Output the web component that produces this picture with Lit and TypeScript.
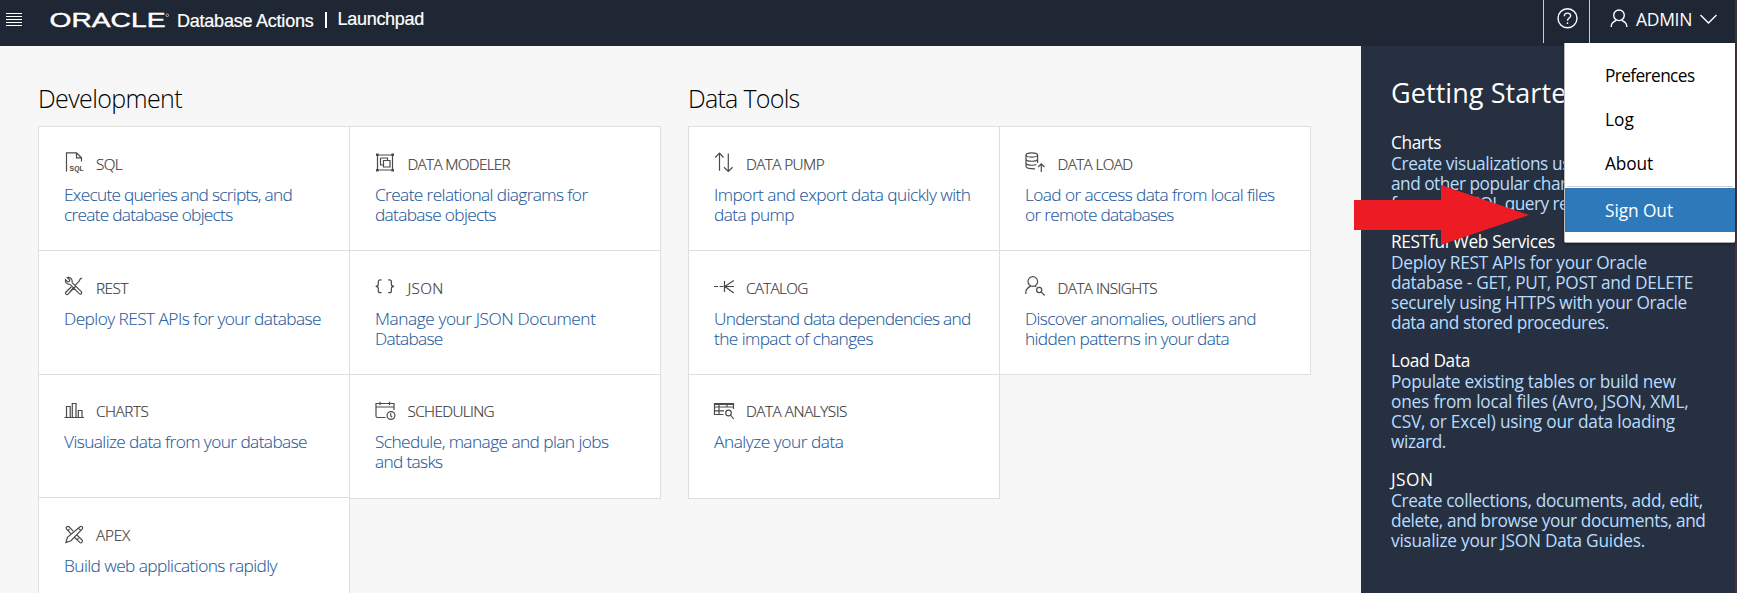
import { LitElement, html, svg, css } from "lit";
import { customElement, property } from "lit/decorators.js";

/** One line of text, tracked so that it fills a given width. */
@customElement("fit-line")
class FitLine extends LitElement {
  @property() text = "";
  @property({ type: Number }) w = 0;
  static styles = css`
    :host { display: block; white-space: nowrap; }
  `;
  render() {
    return html`<span>${this.text}</span>`;
  }
  updated() {
    const s = this.renderRoot.querySelector("span") as HTMLElement;
    s.style.letterSpacing = "0px";
    const natural = s.getBoundingClientRect().width;
    if (this.w && natural) s.style.letterSpacing = (this.w - natural) / this.text.length + "px";
  }
}

const line = (text: string, w: number) => html`<fit-line .text=${text} .w=${w}></fit-line>`;

const icons: Record<string, any> = {
  sql: svg`<path d="M2.5 19.5V.8h10l5 5V9.5M12.5.8v5h5"/><text x="5.6" y="19.2" class="tiny" textLength="14" lengthAdjust="spacingAndGlyphs">SQL</text>`,
  modeler: svg`<path d="M3.5 3h15v15h-15z"/><path d="M6.500 6h7v2.500M6.500 6v7h2.500M9.500 8.500h6.500v6.500h-6.500z"/><path class="fill" d="M2 1.500h2.600v2.600H2zM17.400 1.500H20v2.600h-2.600zM2 16.900h2.600v2.600H2zM17.400 16.900H20v2.600h-2.600z"/>`,
  rest: svg`<path d="M3.300 1.600l2.400 2.300-.4 1.600-1.700.3-2-2.200c-.6 2 .3 4.300 2.800 4.600 1 .1 1.500 0 2 .500l8.800 8.900c1.400 1.300 3.300-.4 2.100-1.900L8.400 6.800c-.4-.6-.2-1.200-.3-2C7.800 2.400 5.500 1 3.300 1.600zM17.900 2.100l-1.700.9-1.200 2.300-3.900 4M9 12l-5 6.300c-1.500 1-3.200-.6-2.200-2.100l5.600-5.500M11.500 10.500L5 17.200"/>`,
  json: svg`<path d="M7.500 3.800H6.300Q4.300 3.800 4.300 5.800v2.400q0 2-2.600 2.100 2.600.1 2.600 2.100v2.300q0 2 2 2h1.200M14.200 3.800h1.200q2 0 2 2v2.400q0 2 2.600 2.100-2.600.1-2.600 2.100v2.300q0 2-2 2h-1.200"/>`,
  charts: svg`<path d="M.5 18.500h19.500M2.500 18.500V7.500h3.700v11M8.300 18.500V4.500h3.700v14M14.300 18.500v-7h3.700v7"/>`,
  scheduling: svg`<path d="M11.500 18.500H3.500q-1.500 0-1.500-1.500V4.500h18V11M2 8h18M6 2.800v3.400M15.500 2.800v3.400"/><circle cx="17" cy="16.500" r="3.900"/><path d="M16.700 14.300v2.500l1.500 1.500"/>`,
  apex: svg`<path d="M16 3.800c1.400-1.300 3.500.2 2.300 2L7 17.700l-5.100 1.800 1.500-5.200zM14.500 5.300l2.400 2.400M9.200 8.200L5 3.800C3.600 2.500 1.300 4.100 2.400 6l4.400 4.600M12.900 12l5.200 5.200c1.200 1.700-.8 3.500-2.400 2.200l-5.200-5.100M4 7.500l1.500-1.300M13 16.600l1.600-1.300"/>`,
  pump: svg`<path d="M5.500 18.800V1.300M1.200 5.500l4.300-4.300 4 4.300M14.300 1.500v17.800M10 15.300l4.300 4.200 4.300-4.200"/>`,
  catalog: svg`<path d="M0 10.500h4M5.500 10.500h4M10.500 5v11M10.500 10.500h9.500M19.800 4.500l-9 6 9 6.500"/>`,
  load: svg`<ellipse cx="7.800" cy="3" rx="5.800" ry="2.200"/><path d="M2 3v11.500c0 1.500 3 2.300 9 2.300M13.600 3v8M2 7c0 3 11.500 3 11.500 0M2 11c0 2.500 7 2.700 10.500 1.500M17.300 20v-8M14.100 15l3.200-3.200 3.200 3.200"/>`,
  insights: svg`<circle cx="8.800" cy="5.500" r="4.800"/><path d="M1.800 18v-1.500c0-3.500 2.500-5.300 5-6.400M10.800 10l1.500.8"/><circle cx="15.200" cy="14" r="2.600"/><path d="M17.100 15.900l3.600 3.600"/>`,
  analysis: svg`<path d="M9.500 15.500H.5V4.500h19v5.500M.5 5.500h19M.5 8h19M.5 11.800h9.500M5 4.500v11M13 4.500V8"/><circle cx="14.500" cy="14" r="2.800"/><path d="M16.500 16l3.200 4"/>`,
};

type Card = { icon: string; title: [string, number]; lines: [string, number][] };
const dev: Card[][] = [
  [
    { icon: "sql", title: ["SQL", 26], lines: [["Execute queries and scripts, and", 228], ["create database objects", 168.500]] },
    { icon: "rest", title: ["REST", 32], lines: [["Deploy REST APIs for your database", 257]] },
    { icon: "charts", title: ["CHARTS", 52.500], lines: [["Visualize data from your database", 243]] },
    { icon: "apex", title: ["APEX", 34], lines: [["Build web applications rapidly", 213]] },
  ],
  [
    { icon: "modeler", title: ["DATA MODELER", 102.500], lines: [["Create relational diagrams for", 212.500], ["database objects", 121]] },
    { icon: "json", title: ["JSON", 36], lines: [["Manage your JSON Document", 220.500], ["Database", 67.500]] },
    { icon: "scheduling", title: ["SCHEDULING", 86.500], lines: [["Schedule, manage and plan jobs", 233.500], ["and tasks", 67.500]] },
  ],
];
const tools: Card[][] = [
  [
    { icon: "pump", title: ["DATA PUMP", 78], lines: [["Import and export data quickly with", 256.500], ["data pump", 80]] },
    { icon: "catalog", title: ["CATALOG", 61.500], lines: [["Understand data dependencies and", 256.500], ["the impact of changes", 159]] },
    { icon: "analysis", title: ["DATA ANALYSIS", 101], lines: [["Analyze your data", 129.500]] },
  ],
  [
    { icon: "load", title: ["DATA LOAD", 75], lines: [["Load or access data from local files", 249.500], ["or remote databases", 148.500]] },
    { icon: "insights", title: ["DATA INSIGHTS", 99.500], lines: [["Discover anomalies, outliers and", 231], ["hidden patterns in your data", 204]] },
  ],
];
const guide: { head: [string, number]; lines: [string, number][] }[] = [
  { head: ["Charts", 50], lines: [["Create visualizations using bar, pie", 264], ["and other popular chart types", 226], ["from your SQL query results.", 216]] },
  { head: ["RESTful Web Services", 164], lines: [["Deploy REST APIs for your Oracle", 256], ["database - GET, PUT, POST and DELETE", 302], ["securely using HTTPS with your Oracle", 296], ["data and stored procedures.", 218]] },
  { head: ["Load Data", 79], lines: [["Populate existing tables or build new", 284.500], ["ones from local files (Avro, JSON, XML,", 297.500], ["CSV, or Excel) using our data loading", 284], ["wizard.", 55]] },
  { head: ["JSON", 42.500], lines: [["Create collections, documents, add, edit,", 312], ["delete, and browse your documents, and", 314.500], ["visualize your JSON Data Guides.", 254]] },
];

@customElement("app-root")
class AppRoot extends LitElement {
  static styles = css`
    :host {
      display: flex; flex-direction: column; width: 1737px; height: 593px; overflow: hidden;
      position: relative; background: #f7f7f7; color: #000;
      font-family: "Open Sans", "Noto Sans", sans-serif;
    }
    svg { display: block; overflow: visible; fill: none; }
    header { height: 46px; flex: none; display: flex; background: #1e2733; color: #fff; border-right: 2px solid #3d3239; box-sizing: border-box; }
    .menu-icon { margin: 13px 0 0 6px; stroke: #fff; stroke-width: 1.200; }
    .logo { margin: 13px 0 0 28px; }
    .logo text { fill: #fff; stroke: #fff; stroke-width: .4; font-family: "Liberation Sans", sans-serif; font-size: 19.500px; }
    .logo circle { stroke: #bbb; stroke-width: .9; }
    .product, .page { font-family: "Liberation Sans", Arial, sans-serif; font-size: 18px; line-height: 20px; -webkit-text-stroke: .2px #fff; }
    .product { margin: 11px 0 0 7px; }
    .bar { width: 2px; height: 16px; background: #fff; margin: 12px 0 0 11px; }
    .page { margin: 9px 0 0 11px; flex: 1; }
    .help { height: 43px; width: 46px; box-sizing: border-box; border-left: 1px solid #c8cbce; padding: 8px 0 0 13px; }
    .user { height: 43px; width: 146px; box-sizing: border-box; border-left: 1px solid #c8cbce; display: flex; }
    .user .person { margin: 9px 0 0 20px; }
    .user .name { font-size: 17.500px; line-height: 20px; margin: 9px 0 0 8px; width: 59px; }
    .user .chev { margin: 14px 0 0 5px; }
    .st { stroke: #fff; stroke-width: 1.400; }
    .body { flex: 1; display: flex; min-height: 0; }
    main { flex: 1; display: flex; gap: 27px; padding: 34px 0 0 38px; align-items: flex-start; }
    h2 { margin: 0 0 10px; font-weight: 300; font-size: 25px; line-height: 36px; height: 36px; }
    .cols { display: flex; align-items: flex-start; }
    .cols > div + div { margin-left: -1px; }
    .card { width: 312px; height: 125px; box-sizing: border-box; border: 1px solid #dedede; background: #fff; padding: 25px 0 0 25px; }
    .card + .card { margin-top: -1px; }
    .short { height: 124px; }
    .title { display: flex; gap: 12px; height: 20px; font-size: 15.300px; line-height: 20px; color: #3c3c3c; font-weight: 300; -webkit-text-stroke: .2px #3c3c3c; }
    .title fit-line { margin-top: 2px; }
    .title svg { stroke: #4a4a4a; stroke-width: 1.200; -webkit-text-stroke: 0; }
    .cols > div + div .title svg { transform: translateX(-1px); }
    .cols > div + div .title fit-line { transform: translateX(.5px); }
    .fill { fill: #4a4a4a; stroke: none; }
    .tiny { font: bold 7.500px "Liberation Sans", sans-serif; fill: #4a4a4a; stroke: none; }
    .third .title { margin-top: -1px; margin-bottom: 1px; }
    .desc { margin-top: 13px; font-size: 17.300px; line-height: 20px; font-weight: 300; color: #1f5a9c; -webkit-text-stroke: .1px #1f5a9c; }
    aside { width: 376px; box-sizing: border-box; background: #263040; border-right: 2px solid #45343d; padding: 29px 0 0 30px; color: #fff; }
    .gs { font-size: 27px; line-height: 36px; margin-bottom: 21px; }
    .block { margin-bottom: 17px; font-size: 17.300px; line-height: 20px; color: #b9dcff; }
    .block .head { line-height: 21px; margin: 0 0 1px; color: #fff; }
    .dropdown { position: absolute; left: 1564px; top: 43px; width: 171px; height: 200px; box-sizing: border-box; background: #fff; border-left: 1px solid #bcbcbc; border-bottom: 1px solid #aaa; border-radius: 0 0 2px 2px; padding-top: 11px; font-size: 17.300px; box-shadow: 0 1px 3px #0006; }
    .item { height: 44px; line-height: 44px; padding-left: 40px; }
    .sep { height: 1px; background: #ccc; margin: 0 2px 1px; }
    .on { background: #2d79ba; color: #fff; line-height: 46px; }
    .arrow { position: absolute; left: 1354px; top: 185px; fill: #ed1c24; }
  `;

  card(c: Card, i: number, n: number) {
    return html`<div class="card ${i === 2 ? "third" : ""} ${i === 2 && n === 4 ? "short" : ""}">
      <div class="title"><svg width="20" height="20">${icons[c.icon]}</svg>${line(...c.title)}</div>
      <div class="desc">${c.lines.map((l) => line(...l))}</div>
    </div>`;
  }
  group(name: string, w: number, cols: Card[][]) {
    return html`<section><h2>${line(name, w)}</h2>
      <div class="cols">${cols.map((c) => html`<div>${c.map((k, i) => this.card(k, i, c.length))}</div>`)}</div></section>`;
  }
  render() {
    return html`
      <header>
        <svg class="menu-icon" width="16" height="14"><path d="M0 .5h16M0 3.500h16M0 6.500h16M0 9.500h16M0 12.500h16"/></svg>
        <svg class="logo" width="120" height="16">
          <text x="-.5" y="14.300" textLength="116" lengthAdjust="spacingAndGlyphs">ORACLE</text>
          <circle cx="117.300" cy="2.300" r="1.300"/>
        </svg>
        <div class="product">${line("Database Actions", 136.500)}</div>
        <div class="bar"></div>
        <div class="page">${line("Launchpad", 86.500)}</div>
        <div class="help"><svg class="st" width="21" height="21"><circle cx="10.500" cy="10.300" r="9.500"/><path d="M7.300 8.200c0-4.200 6.600-4 6.300-.2-.2 2.200-3.100 2-3.100 4.700"/><path d="M10.500 14.300v1.700"/></svg></div>
        <div class="user">
          <svg class="st person" width="18" height="19"><circle cx="9" cy="6.300" r="5.300"/><path d="M1.300 18v-1.200c0-2.600 2.500-4.300 4.900-5.500M11.800 11.300c2.400 1.200 4.900 2.900 4.900 5.500V18"/></svg>
          <div class="name">${line("ADMIN", 56)}</div>
          <svg class="st chev" width="17" height="10"><path d="M.5 1l8 8 8-8"/></svg>
        </div>
      </header>
      <div class="body">
        <main>${this.group("Development", 144, dev)}${this.group("Data Tools", 111.500, tools)}</main>
        <aside>
          <div class="gs">${line("Getting Started", 192)}</div>
          ${guide.map((g) => html`<div class="block"><div class="head">${line(...g.head)}</div>${g.lines.map((l) => line(...l))}</div>`)}
        </aside>
      </div>
      <div class="dropdown">
        <div class="item">${line("Preferences", 89.500)}</div>
        <div class="item">${line("Log", 29)}</div>
        <div class="item">${line("About", 48)}</div>
        <div class="sep"></div>
        <div class="item on">${line("Sign Out", 68)}</div>
      </div>
      <svg class="arrow" width="176" height="60"><path d="M0 15h87V0l88 30-88 30V45H0z"/></svg>
    `;
  }
}
